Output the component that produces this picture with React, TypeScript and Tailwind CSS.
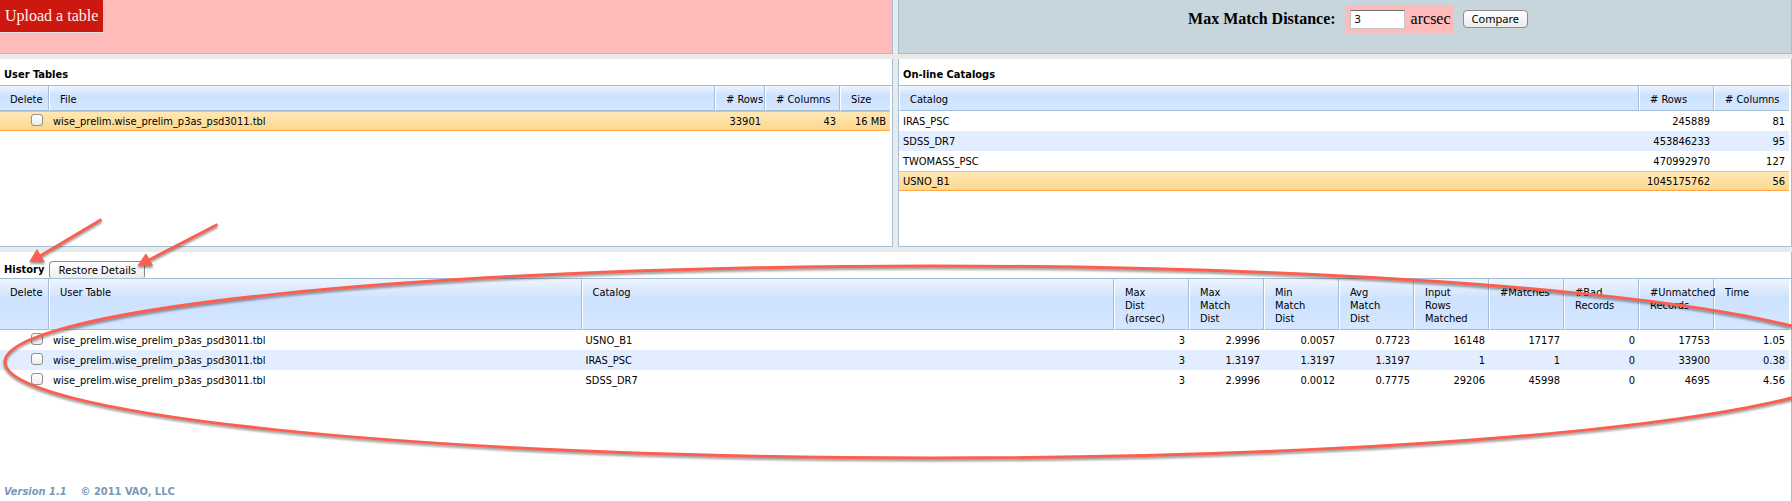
import type { ReactNode } from 'react'

type Column = { label: ReactNode; width?: string; numeric?: boolean }
type Row = { cells: string[]; selected?: boolean }

const FILE = 'wise_prelim.wise_prelim_p3as_psd3011.tbl'

const userColumns: Column[] = [
  { label: 'File' },
  { label: '# Rows', width: 'w-[50px]', numeric: true },
  { label: '# Columns', width: 'w-[75px]', numeric: true },
  { label: 'Size', width: 'w-[50px]', numeric: true },
]
const userRows: Row[] = [{ cells: [FILE, '33901', '43', '16 MB'], selected: true }]

const catalogColumns: Column[] = [
  { label: 'Catalog' },
  { label: '# Rows', width: 'w-[75px]', numeric: true },
  { label: '# Columns', width: 'w-[75px]', numeric: true },
]
const catalogRows: Row[] = [
  { cells: ['IRAS_PSC', '245889', '81'] },
  { cells: ['SDSS_DR7', '453846233', '95'] },
  { cells: ['TWOMASS_PSC', '470992970', '127'] },
  { cells: ['USNO_B1', '1045175762', '56'], selected: true },
]

const num = (...lines: string[]): Column => ({
  label: lines.map((line) => (
    <span key={line} className="block">
      {line}
    </span>
  )),
  width: 'w-[75px]',
  numeric: true,
})
const historyColumns: Column[] = [
  { label: 'User Table' },
  { label: 'Catalog' },
  num('Max', 'Dist', '(arcsec)'),
  num('Max', 'Match', 'Dist'),
  num('Min', 'Match', 'Dist'),
  num('Avg', 'Match', 'Dist'),
  num('Input', 'Rows', 'Matched'),
  num('#Matches'),
  num('#Bad', 'Records'),
  num('#Unmatched', 'Records'),
  num('Time'),
]
const historyRows: Row[] = [
  { cells: [FILE, 'USNO_B1', '3', '2.9996', '0.0057', '0.7723', '16148', '17177', '0', '17753', '1.05'] },
  { cells: [FILE, 'IRAS_PSC', '3', '1.3197', '1.3197', '1.3197', '1', '1', '0', '33900', '0.38'] },
  { cells: [FILE, 'SDSS_DR7', '3', '2.9996', '0.0012', '0.7775', '29206', '45998', '0', '4695', '4.56'] },
]

const TH =
  'border-b border-[#a3bfd5] bg-linear-to-b from-[#eef4fd] via-[#cde2ff] via-40% to-[#d6e7ff] pt-[7px] pb-1 pl-2.5 text-left align-top font-normal whitespace-nowrap'

function DataTable({ columns, rows, deletable }: { columns: Column[]; rows: Row[]; deletable?: boolean }) {
  return (
    <div className="border-t border-[#a3bfd5] pr-0.5">
      <table className="w-full table-fixed border-separate border-spacing-0 leading-[13px]">
        <colgroup>
          {deletable && <col className="w-[49px]" />}
          {columns.map((c, i) => (
            <col key={i} className={c.width} />
          ))}
        </colgroup>
        <thead>
          <tr>
            {deletable && <th className={`${TH} border-r`}>Delete</th>}
            {columns.map((c, i) => (
              <th
                key={i}
                className={`${TH} border-l border-l-white ${i < columns.length - 1 ? 'border-r' : ''}`}
              >
                {c.label}
              </th>
            ))}
          </tr>
        </thead>
        <tbody>
          {rows.map((row, r) => {
            const look = row.selected
              ? 'border-y border-t-[#fbbf5c] border-b-[#ffa546] bg-linear-to-b from-[#ffe7b6] to-[#fdd88c]'
              : r % 2
                ? 'bg-[#e2eeff]'
                : 'bg-white'
            return (
              <tr key={r} className="h-5">
                {deletable && (
                  <td className={`${look} pr-1.5 text-right align-top ${row.selected ? 'pt-0.5' : 'pt-[3px]'}`}>
                    <input
                      type="checkbox"
                      aria-label={`Delete row ${r + 1}`}
                      className="ml-auto block size-3 appearance-none rounded-[3px] border border-[#8e8e8e] bg-linear-to-b from-white to-[#ececec]"
                    />
                  </td>
                )}
                {row.cells.map((cell, i) => (
                  <td
                    key={i}
                    className={`${look} overflow-hidden whitespace-nowrap ${columns[i].numeric ? 'pr-1 text-right' : 'pl-1'}`}
                  >
                    {cell}
                  </td>
                ))}
              </tr>
            )
          })}
        </tbody>
      </table>
    </div>
  )
}

const BUTTON =
  'rounded-[4px] border border-[#8a8a8a] bg-linear-to-b from-white to-[#ececec] px-2 font-["Noto_Sans",sans-serif] text-[11px] leading-4 whitespace-nowrap'

export default function App() {
  return (
    <div className='relative flex min-h-screen flex-col gap-[5px] overflow-hidden bg-[#eaeaea] font-["DejaVu_Sans_Condensed","DejaVu_Sans",sans-serif] text-[11px] text-black'>
      <div className='grid h-[54px] grid-cols-[893fr_894fr] gap-[5px] font-["Liberation_Serif",serif] text-base leading-5'>
        <div className="flex items-start border-r border-b border-[#a3bfd5] bg-[#ffbaba]">
          <button className="border-b border-[#e8e0e0] bg-[#cc180f] px-[5px] py-1.5 text-[#fff0ee]">
            Upload a table
          </button>
        </div>
        <form
          className="flex items-start justify-center gap-[9px] border border-t-0 border-[#a3bfd5] bg-[#c7d5dc] pt-[5px] pl-[26px]"
          onSubmit={(e) => e.preventDefault()}
        >
          <label htmlFor="distance" className="py-1 font-bold">
            Max Match Distance:
          </label>
          <span className="flex items-center gap-1.5 bg-[#ffbaba] py-1 pr-[3px] pl-[5px]">
            <input
              id="distance"
              defaultValue="3"
              className='h-[19px] w-[55px] border border-[#c4c4c4] border-t-[#707070] bg-white px-1 font-["Noto_Sans",sans-serif] text-[11px]'
            />
            arcsec
          </span>
          <button className={`${BUTTON} mt-[5px]`}>Compare</button>
        </form>
      </div>

      <div className="grid h-[188px] grid-cols-[893fr_894fr] gap-[5px]">
        <section className="border-r border-b border-[#a3bfd5] bg-white">
          <h2 className="px-1 pt-[9px] pb-1 leading-[13px] font-bold">User Tables</h2>
          <DataTable columns={userColumns} rows={userRows} deletable />
        </section>
        <section className="border-x border-b border-[#a3bfd5] bg-white">
          <h2 className="px-1 pt-[9px] pb-1 leading-[13px] font-bold">On-line Catalogs</h2>
          <DataTable columns={catalogColumns} rows={catalogRows} />
        </section>
      </div>

      <section className="flex flex-1 flex-col border-r border-[#a3bfd5] bg-white">
        <div className="flex items-end gap-[5px] pt-[9px] pl-1">
          <h2 className="leading-4 font-bold">History</h2>
          <button className={`${BUTTON} rounded-b-[2px] border-b-0`}>Restore Details</button>
        </div>
        <DataTable columns={historyColumns} rows={historyRows} deletable />
        <footer className="mt-auto flex gap-3.5 px-1 pb-[3px] leading-[13px] font-bold text-[#7b98b3]">
          <em>Version 1.1</em>
          <span>© 2011 VAO, LLC</span>
        </footer>
      </section>

      <svg
        aria-hidden="true"
        className="pointer-events-none absolute inset-0 size-full drop-shadow-[0_2px_1px_rgba(0,0,0,0.4)]"
        fill="none"
        stroke="#fb5f50"
        strokeWidth="3"
      >
        <ellipse cx="932" cy="362" rx="927" ry="96" />
        <path d="M101.500 219.500 40 256M217.500 224.500 149 260" />
        <path d="M29.300 261.700 37 249 45 262.300ZM137.300 265.700 146 253.300 153.300 266Z" fill="#fb5f50" stroke="none" />
      </svg>
    </div>
  )
}
